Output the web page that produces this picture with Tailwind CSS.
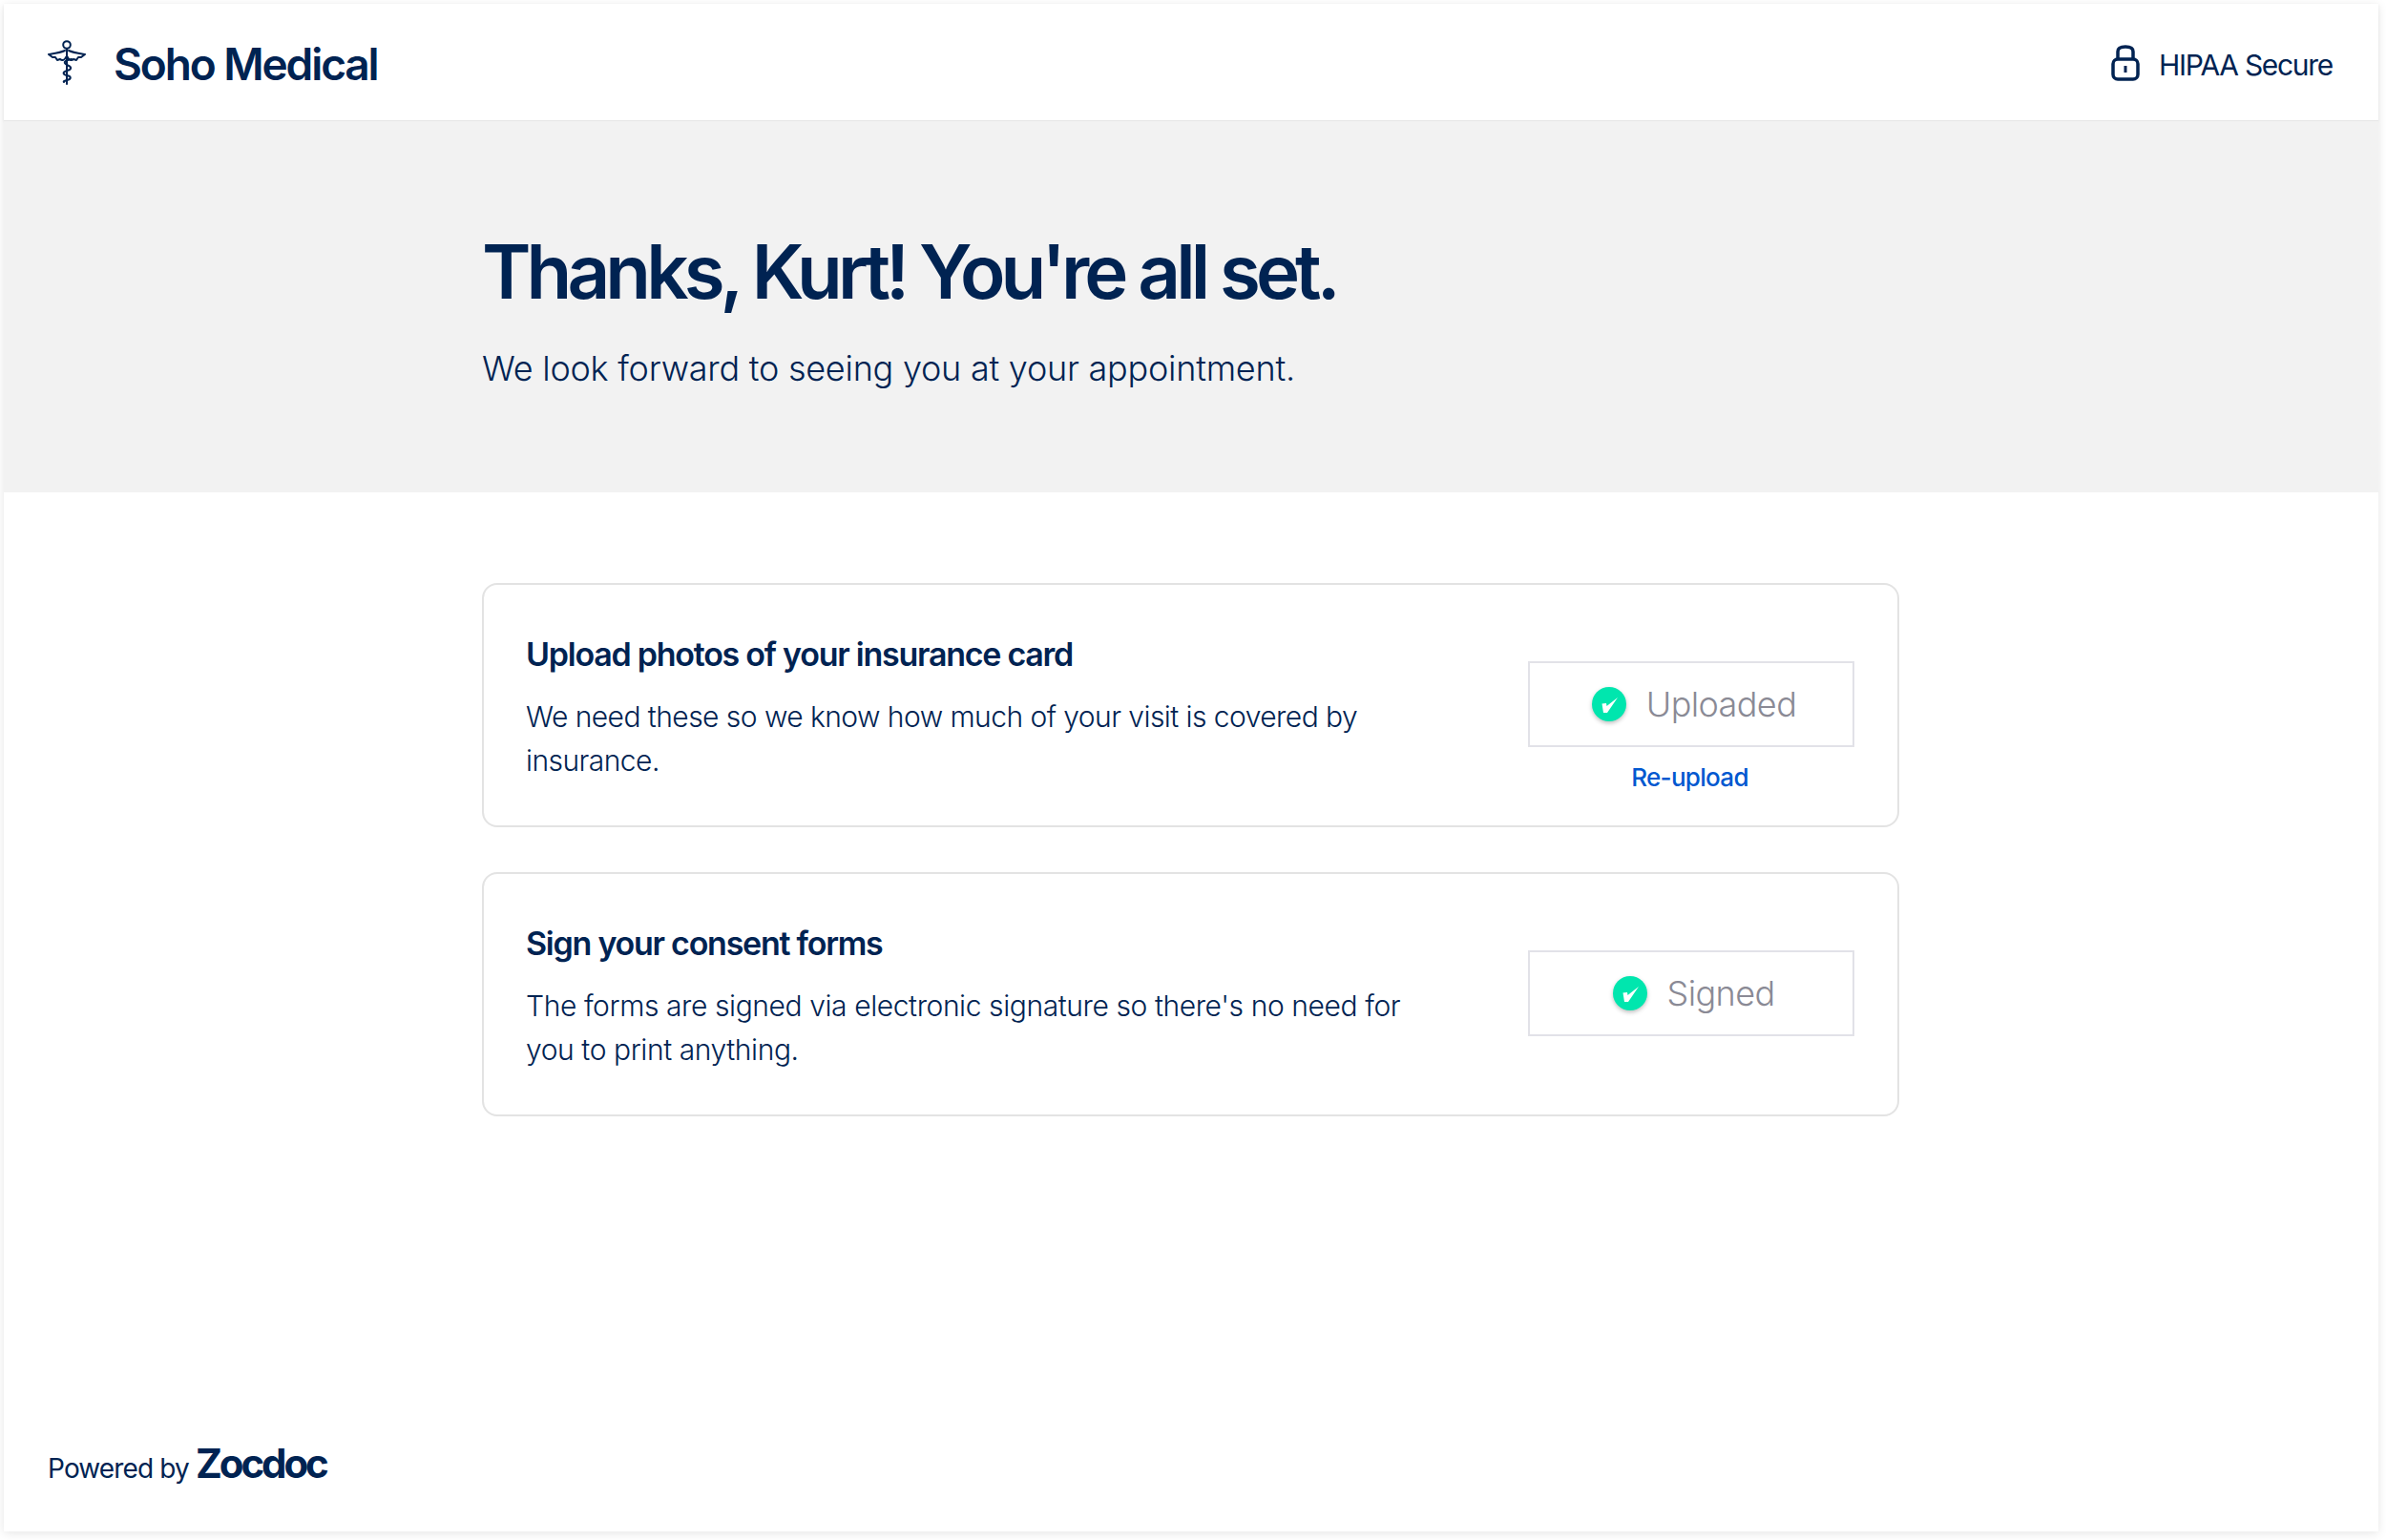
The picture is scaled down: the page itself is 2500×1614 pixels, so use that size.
<!doctype html>
<html><head><meta charset="utf-8"><script src="https://cdn.jsdelivr.net/npm/@tailwindcss/browser@4"></script></head>
<body class="bg-white">
<div class="h-[1614px] w-[2500px] pl-[4px] pt-[4px] font-['Inter',sans-serif] text-[#002352]">
<div class="flex h-[1601px] w-[2488px] flex-col bg-white shadow-[0_2px_10px_rgba(0,0,0,0.10)]">
<header class="flex h-[123px] shrink-0 items-center justify-between border-b border-[#e6e6e6] pl-[45px] pr-[48px] shadow-[0_1px_3px_rgba(0,0,0,0.06)]">
<div class="flex items-center gap-[28px]">
<svg width="42" height="48" viewBox="0 0 42 48" fill="none" stroke="#002352" stroke-width="2" stroke-linejoin="round" stroke-linecap="round"><circle cx="21" cy="6" r="3.8"/><path d="M21 10V47"/><path d="M19 12C15 14 8 15 2 16L6 19L9 19L11 22L14 21C16 23 19 22 20 19"/><path d="M23 12C27 14 34 15 40 16L36 19L33 19L31 22L28 21C26 23 23 22 22 19"/><path d="M26 21C20 22 16 24 21 27C27 29 26 32 21 33C16 35 17 37 21 38C26 39 26 42 21 43C19 44 17 44 18 45"/></svg>
<div class="mt-[3px] text-[46px] font-semibold leading-none tracking-[-2.1px]">Soho Medical</div>
</div>
<div class="flex items-center gap-[20px]">
<svg width="30" height="38" viewBox="0 0 30 38" fill="none" stroke="#002352" stroke-width="3.500" class="mt-[1px]"><path d="M7 15V7C7 3.500 9.500 2 15 2C20.500 2 23 3.500 23 7V15"/><rect x="2" y="15" width="26" height="21" rx="5"/><rect x="13.500" y="22" width="3" height="7" fill="#002352" stroke="none"/></svg>
<div class="mt-[6px] text-[30px] leading-none tracking-[-1.3px]">HIPAA Secure</div>
</div>
</header>
<section class="h-[389px] shrink-0 bg-[#f2f2f2] pl-[501px] pt-[113px]">
<h1 class="text-[78px] font-semibold leading-[90px] tracking-[-4.9px]">Thanks, Kurt! You're all set.</h1>
<p class="mt-[32px] text-[36px] font-light leading-[48px] tracking-[-0.24px]">We look forward to seeing you at your appointment.</p>
</section>
<main class="flex flex-1 flex-col gap-[47px] pl-[501px] pt-[95px]">
<article class="flex h-[256px] w-[1485px] justify-between rounded-[16px] border-2 border-[#e3e3e3] pl-[44px] pr-[45px] pt-[52px]">
<div class="w-[960px]">
<h2 class="text-[34px] font-semibold leading-[42px] tracking-[-1.25px]">Upload photos of your insurance card</h2>
<p class="mt-[21px] text-[30px] font-light leading-[46px] tracking-[-0.55px]">We need these so we know how much of your visit is covered by insurance.</p>
</div>
<div class="flex w-[342px] flex-col items-center pt-[28px]">
<div class="flex h-[90px] w-[342px] items-center justify-center gap-[20px] border-2 border-[#e2e2e8] pl-[5px]">
<svg width="38" height="38" viewBox="0 0 38 38" class="drop-shadow-[0_2px_2px_rgba(0,0,0,0.25)]"><circle cx="19" cy="19" r="18" fill="#00e6ae"/><path d="M11.500 18.500L16 18L16.500 21L28 12L17 28H13Z" fill="#fff"/></svg>
<span class="text-[36px] font-light leading-none tracking-[-0.6px] text-[#8a8a95]">Uploaded</span>
</div>
<a class="mr-[3px] mt-[14px] text-[26px] font-medium leading-[36px] tracking-[-0.7px] text-[#0058d0]">Re-upload</a>
</div>
</article>
<article class="flex h-[256px] w-[1485px] justify-between rounded-[16px] border-2 border-[#e3e3e3] pl-[44px] pr-[45px] pt-[52px]">
<div class="w-[960px]">
<h2 class="text-[34px] font-semibold leading-[42px] tracking-[-1.25px]">Sign your consent forms</h2>
<p class="mt-[21px] text-[30px] font-light leading-[46px] tracking-[-0.41px]">The forms are signed via electronic signature so there's no need for you to print anything.</p>
</div>
<div class="flex w-[342px] flex-col items-center pt-[28px]">
<div class="flex h-[90px] w-[342px] items-center justify-center gap-[20px] border-2 border-[#e2e2e8] pl-[4px]">
<svg width="38" height="38" viewBox="0 0 38 38" class="drop-shadow-[0_2px_2px_rgba(0,0,0,0.25)]"><circle cx="19" cy="19" r="18" fill="#00e6ae"/><path d="M11.500 18.500L16 18L16.500 21L28 12L17 28H13Z" fill="#fff"/></svg>
<span class="text-[36px] font-light leading-none tracking-[-0.6px] text-[#8a8a95]">Signed</span>
</div>
</div>
</article>
</main>
<footer class="flex h-[94px] shrink-0 items-start gap-[7px] pl-[46px]">
<span class="mt-[10px] text-[28px] leading-[36px] tracking-[-0.85px]">Powered by</span>
<span class="text-[42px] font-bold leading-[46px] tracking-[-3.1px]">Zocdoc</span>
</footer>
</div>
</div>
</body></html>
